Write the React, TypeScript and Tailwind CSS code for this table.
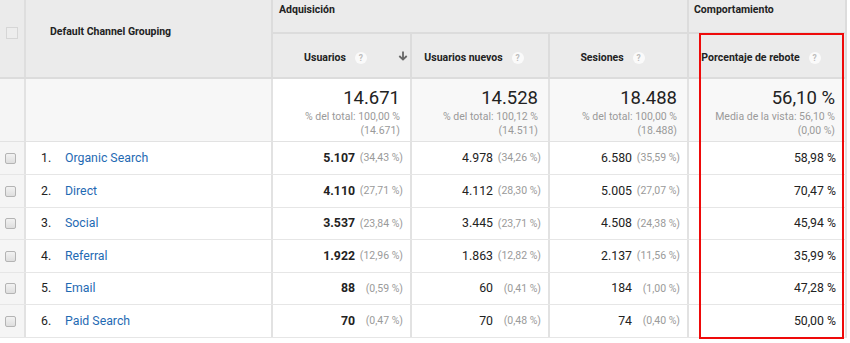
import React from "react";

const font = { fontFamily: "Roboto, 'Liberation Sans', sans-serif" };

type Row = {
  n: number;
  name: string;
  u: string;
  up: string;
  nu: string;
  nup: string;
  s: string;
  sp: string;
  b: string;
};

const rows: Row[] = [
  { n: 1, name: "Organic Search", u: "5.107", up: "(34,43 %)", nu: "4.978", nup: "(34,26 %)", s: "6.580", sp: "(35,59 %)", b: "58,98 %" },
  { n: 2, name: "Direct", u: "4.110", up: "(27,71 %)", nu: "4.112", nup: "(28,30 %)", s: "5.005", sp: "(27,07 %)", b: "70,47 %" },
  { n: 3, name: "Social", u: "3.537", up: "(23,84 %)", nu: "3.445", nup: "(23,71 %)", s: "4.508", sp: "(24,38 %)", b: "45,94 %" },
  { n: 4, name: "Referral", u: "1.922", up: "(12,96 %)", nu: "1.863", nup: "(12,82 %)", s: "2.137", sp: "(11,56 %)", b: "35,99 %" },
  { n: 5, name: "Email", u: "88", up: "(0,59 %)", nu: "60", nup: "(0,41 %)", s: "184", sp: "(1,00 %)", b: "47,28 %" },
  { n: 6, name: "Paid Search", u: "70", up: "(0,47 %)", nu: "70", nup: "(0,48 %)", s: "74", sp: "(0,40 %)", b: "50,00 %" },
];

const heights = ["h-[33px]", "h-[33px]", "h-[32px]", "h-[33px]", "h-[32px]", "h-[33px]"];

function Help() {
  return (
    <span className="ml-[9px] inline-flex h-[12px] w-[12px] items-center justify-center rounded-full bg-[#fafafa] text-[8.5px] font-bold leading-none text-[#bdbdbd]">
      ?
    </span>
  );
}

function Check() {
  return (
    <span className="block h-[11px] w-[11px] rounded-[2px] border border-[#b4b4b4] bg-gradient-to-b from-[#f2f2f2] to-[#dedede]" />
  );
}

function HeadLabel({ label, arrow }: { label: string; arrow?: boolean }) {
  return (
    <div className="flex h-full items-center pt-[5px]">
      <div className="flex flex-1 items-center justify-center">
        <span className="text-[10.5px] font-bold leading-[14px] text-[#222]">{label}</span>
        <Help />
      </div>
      <div className="flex w-[12px] items-center pb-[4px]">
        {arrow && (
          <svg width="10" height="10" viewBox="0 0 10 10" fill="none">
            <path d="M5 0.5V8.5M1.3 5L5 8.6L8.7 5" stroke="#666" strokeWidth="1.8" />
          </svg>
        )}
      </div>
    </div>
  );
}

function NumPct({ v, p, bold }: { v: string; p: string; bold?: boolean }) {
  return (
    <div className="flex h-full items-center justify-end pr-[7px]">
      <span className={`text-[12.3px] text-[#222] ${bold ? "font-bold" : ""}`}>{v}</span>
      <span className="w-[48px] text-right text-[10.5px] text-[#9a9a9a]">{p}</span>
    </div>
  );
}

function Total({ big, l1, l2 }: { big: string; l1: string; l2: string }) {
  return (
    <div className="flex h-full flex-col items-end pr-[10px] pt-[8px]">
      <span className="text-[18.5px] leading-[23px] text-[#222]">{big}</span>
      <span className="text-[10.5px] leading-[14px] text-[#9a9a9a]">{l1}</span>
      <span className="text-[10.5px] leading-[14px] text-[#9a9a9a]">{l2}</span>
    </div>
  );
}

export default function App() {
  return (
    <div className="relative h-[343px] w-[850px] overflow-hidden bg-white" style={font}>
      <div className="w-[847px]">
        {/* Header */}
        <div className="flex h-[79px] border-b-2 border-[#dcdcdc] bg-[#ebebeb]">
          <div className="w-[26px] border-r-2 border-[#dedede] pl-[6px] pt-[27px]">
            <span className="block h-[12px] w-[12px] border border-[#d6d6d6] bg-[#ededed]" />
          </div>
          <div className="w-[247px] border-r-2 border-[#dcdcdc] pl-[24px] pt-[25px]">
            <span className="block text-[10.5px] font-bold leading-[14px] text-[#222]">Default Channel Grouping</span>
          </div>
          <div className="flex flex-col">
            <div className="flex h-[34px] border-b-2 border-[#dcdcdc]">
              <div className="w-[416px] border-r-2 border-[#dcdcdc] pl-[6px] pt-[3px]">
                <span className="block text-[10.5px] font-bold leading-[14px] text-[#222]">Adquisición</span>
              </div>
              <div className="w-[158px] border-r-2 border-[#dcdcdc] pl-[5px] pt-[3px]">
                <span className="block text-[10.5px] font-bold leading-[14px] text-[#222]">Comportamiento</span>
              </div>
            </div>
            <div className="flex h-[43px]">
              <div className="w-[139px] border-r-2 border-[#dcdcdc]">
                <HeadLabel label="Usuarios" arrow />
              </div>
              <div className="w-[138px] border-r-2 border-[#dcdcdc]">
                <HeadLabel label="Usuarios nuevos" />
              </div>
              <div className="w-[139px] border-r-2 border-[#dcdcdc]">
                <HeadLabel label="Sesiones" />
              </div>
              <div className="w-[158px] border-r-2 border-[#dcdcdc]">
                <HeadLabel label="Porcentaje de rebote" />
              </div>
            </div>
          </div>
        </div>

        {/* Totals */}
        <div className="flex h-[63px] border-b border-[#e2e2e2]">
          <div className="w-[26px] border-r-2 border-[#e2e2e2] bg-[#f5f5f5]" />
          <div className="w-[247px] border-r-2 border-[#e2e2e2] bg-[#f7f7f7]" />
          <div className="w-[139px] border-r-2 border-[#e2e2e2] bg-white">
            <Total big="14.671" l1="% del total: 100,00 %" l2="(14.671)" />
          </div>
          <div className="w-[138px] border-r-2 border-[#e2e2e2] bg-[#f8f8f8]">
            <Total big="14.528" l1="% del total: 100,12 %" l2="(14.511)" />
          </div>
          <div className="w-[139px] border-r-2 border-[#e2e2e2] bg-[#f8f8f8]">
            <Total big="18.488" l1="% del total: 100,00 %" l2="(18.488)" />
          </div>
          <div className="w-[158px] border-r-2 border-[#e2e2e2] bg-[#f8f8f8]">
            <Total big="56,10 %" l1="Media de la vista: 56,10 %" l2="(0,00 %)" />
          </div>
        </div>

        {/* Rows */}
        {rows.map((r, i) => (
          <div key={r.n} className={`flex ${heights[i]} border-b border-[#e6e6e6]`}>
            <div className="flex w-[26px] items-center border-r-2 border-[#e2e2e2] bg-[#f5f5f5] pl-[5px]">
              <Check />
            </div>
            <div className="flex w-[247px] items-center border-r-2 border-[#e2e2e2] pl-[15px]">
              <span className="w-[24px] text-[12.3px] text-[#222]">{r.n}.</span>
              <span className="text-[12.3px] text-[#1f6ab3]">{r.name}</span>
            </div>
            <div className="w-[139px] border-r-2 border-[#e2e2e2]">
              <NumPct v={r.u} p={r.up} bold />
            </div>
            <div className="w-[138px] border-r-2 border-[#e2e2e2]">
              <NumPct v={r.nu} p={r.nup} />
            </div>
            <div className="w-[139px] border-r-2 border-[#e2e2e2]">
              <NumPct v={r.s} p={r.sp} />
            </div>
            <div className="flex w-[158px] items-center justify-end border-r-2 border-[#e2e2e2] pr-[9px]">
              <span className="text-[12.3px] text-[#222]">{r.b}</span>
            </div>
          </div>
        ))}
      </div>

      {/* Red highlight box */}
      <div className="pointer-events-none absolute left-[699px] top-[33px] h-[306px] w-[145px] border-2 border-[#ee0a0a]" />
    </div>
  );
}
